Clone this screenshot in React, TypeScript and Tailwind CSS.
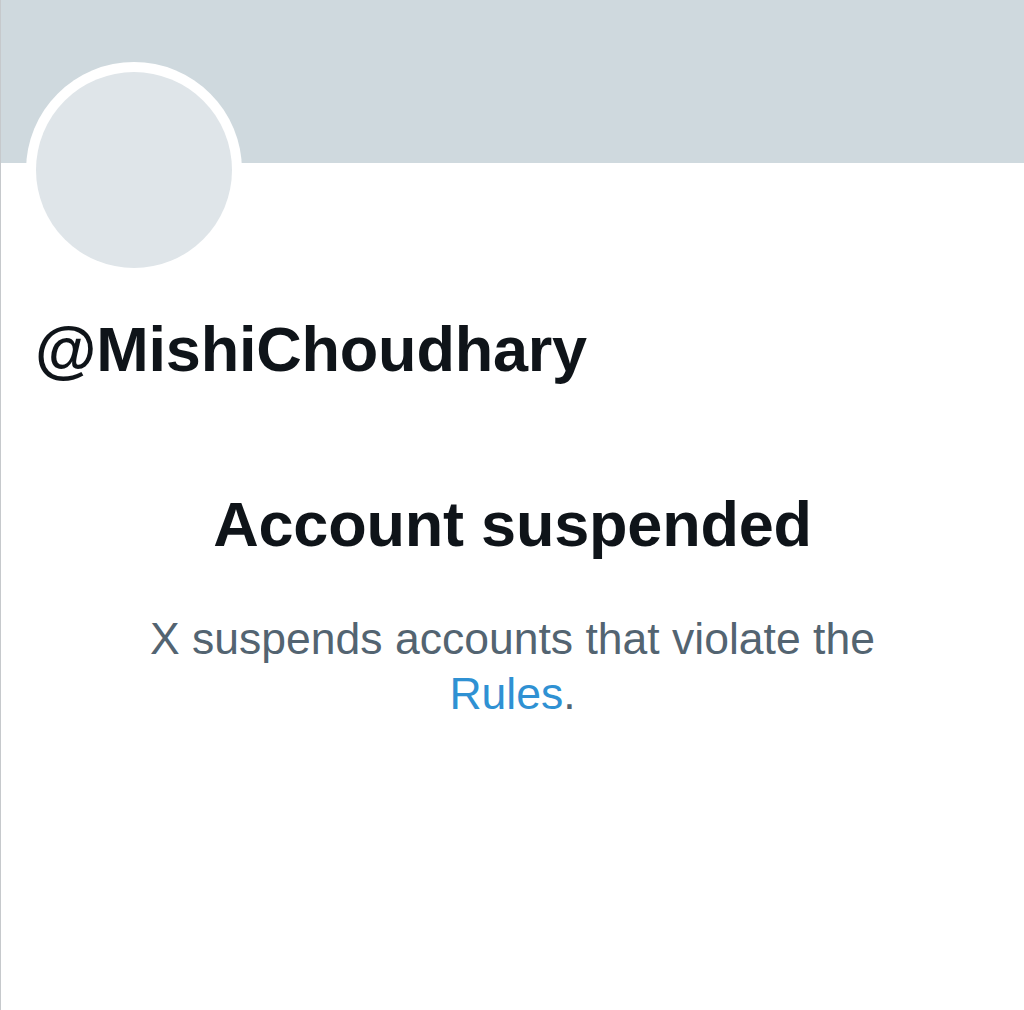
export default function App() {
  return (
    <div
      className="w-[1024px] h-[1010px] bg-white overflow-hidden"
      style={{ fontFamily: '"Liberation Sans", Arial, sans-serif' }}
    >
      <div className="h-full w-full border-l border-l-[#c6c9cc] flex flex-col">
        <div className="h-[163px] bg-[#cfd9de] shrink-0" />
        <div className="ml-[25px] -mt-[101px] w-[216px] h-[216px] rounded-full bg-white p-[10px] shrink-0">
          <div className="w-full h-full rounded-full bg-[#dfe5e9]" />
        </div>
        <div className="mt-[34px] pl-[34px] text-[63px] leading-[74px] font-bold text-[#0f1419] tracking-[-0.2px]">
          @MishiChoudhary
        </div>
        <div className="mt-[101px] text-center text-[63px] leading-[74px] font-bold text-[#0f1419] tracking-[-0.2px]">
          Account suspended
        </div>
        <p className="mt-[50px] mx-auto max-w-[790px] text-center text-[44.5px] leading-[55px] text-[#536471]">
          X suspends accounts that violate the{' '}
          <a href="#" className="text-[#2f91d3]">Rules</a>.
        </p>
      </div>
    </div>
  );
}
